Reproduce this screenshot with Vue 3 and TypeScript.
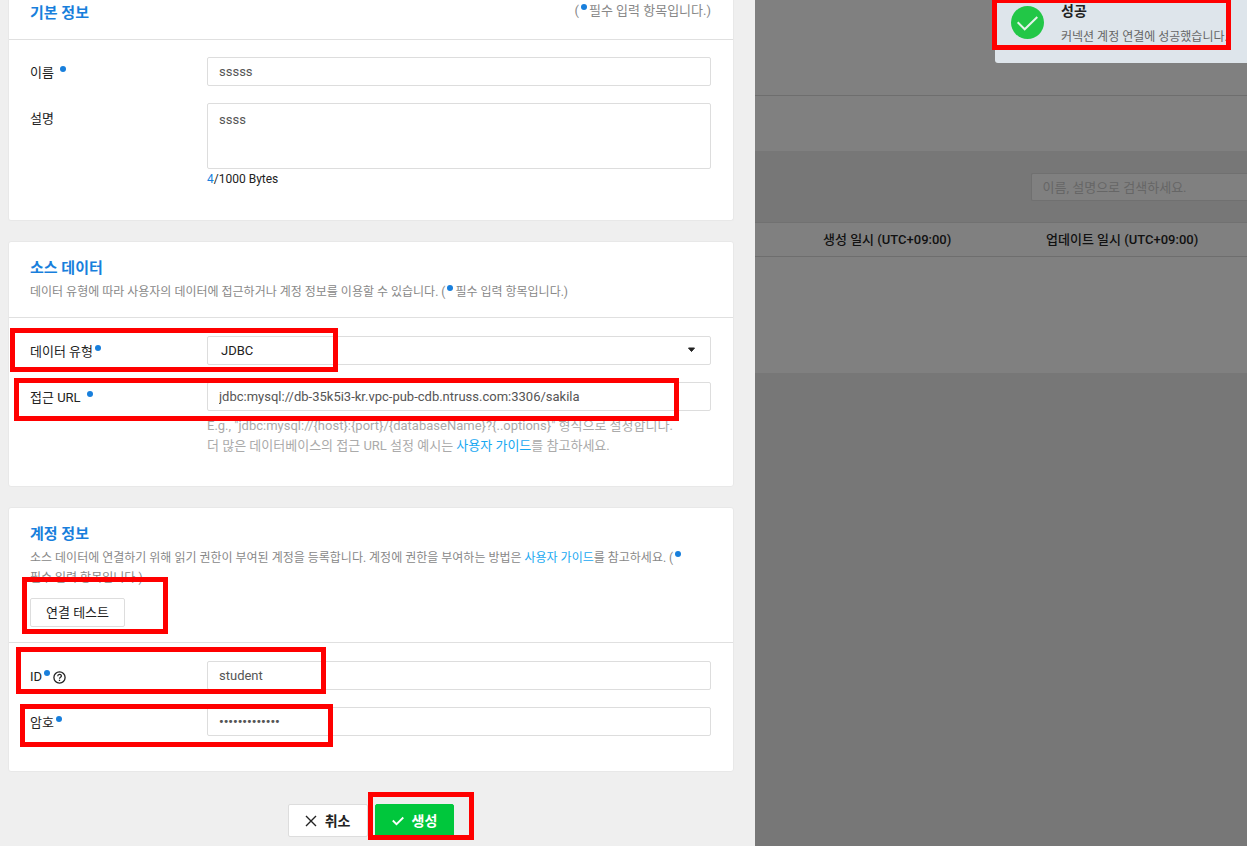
<script setup lang="ts">
import { ref, computed } from 'vue'

const name = ref('sssss')
const description = ref('ssss')
const dataType = ref('JDBC')
const url = ref('jdbc:mysql://db-35k5i3-kr.vpc-pub-cdb.ntruss.com:3306/sakila')
const accountId = ref('student')
const password = ref('student123456')
const keyword = ref('')

const byteCount = computed(() => new TextEncoder().encode(description.value).length)
</script>

<template>
  <div class="page">
    <form class="drawer" @submit.prevent>
      <section class="card card-first">
        <header class="card-head head-inline">
          <h2>기본 정보</h2>
          <p class="desc note">(<i class="dot dot-note"></i>필수 입력 항목입니다.)</p>
        </header>
        <div class="card-body">
          <div class="row">
            <label class="label" for="name">이름<i class="dot dot-wide"></i></label>
            <input id="name" v-model="name" class="field" type="text" />
          </div>
          <div class="row">
            <label class="label" for="description">설명</label>
            <div class="control">
              <textarea id="description" v-model="description" class="field area"></textarea>
              <p class="count"><b>{{ byteCount }}</b>/1000 Bytes</p>
            </div>
          </div>
        </div>
      </section>

      <section class="card card-source">
        <header class="card-head">
          <h2>소스 데이터</h2>
          <p class="desc">데이터 유형에 따라 사용자의 데이터에 접근하거나 계정 정보를 이용할 수 있습니다. (<i class="dot dot-note"></i>필수 입력 항목입니다.)</p>
        </header>
        <div class="card-body">
          <div class="row">
            <label class="label" for="type">데이터 유형<i class="dot"></i></label>
            <div class="control select-wrap">
              <select id="type" v-model="dataType" class="field select">
                <option>JDBC</option>
              </select>
              <svg class="caret" width="9" height="6" viewBox="0 0 9 6"><path d="M1.500 1h6L4.500 4.500z" fill="#222" stroke="#222" stroke-linejoin="round" /></svg>
            </div>
          </div>
          <div class="row">
            <label class="label" for="url">접근 URL<i class="dot dot-wide"></i></label>
            <div class="control">
              <input id="url" v-model="url" class="field" type="text" />
              <p class="hint">E.g., "jdbc:mysql://{host}:{port}/{databaseName}?{..options}" 형식으로 설정합니다.<br />더 많은 데이터베이스의 접근 URL 설정 예시는 <a href="#">사용자 가이드</a>를 참고하세요.</p>
            </div>
          </div>
        </div>
      </section>

      <section class="card card-account">
        <header class="card-head">
          <h2>계정 정보</h2>
          <p class="desc">소스 데이터에 연결하기 위해 읽기 권한이 부여된 계정을 등록합니다. 계정에 권한을 부여하는 방법은 <a href="#">사용자 가이드</a>를 참고하세요. (<i class="dot dot-note"></i><br />필수 입력 항목입니다.)</p>
          <button class="test" type="button">연결 테스트</button>
        </header>
        <div class="card-body">
          <div class="row">
            <label class="label" for="account">ID<i class="dot"></i><svg class="help" width="13" height="13" viewBox="0 0 13 13" fill="none" stroke="#222"><circle cx="6.5" cy="6.5" r="5.6" stroke-width="1.3" /><path d="M4.7 5.2c0-2.5 3.7-2.4 3.7-.2 0 1.300-1.900 1.300-1.900 2.700" stroke-width="1.2" /><path d="M6.500 8.700v1.300" stroke-width="1.300" /></svg></label>
            <input id="account" v-model="accountId" class="field" type="text" />
          </div>
          <div class="row">
            <label class="label" for="password">암호<i class="dot"></i></label>
            <input id="password" v-model="password" class="field password" type="password" />
          </div>
        </div>
      </section>

      <div class="actions">
        <button class="action cancel" type="button">
          <svg width="12" height="12" viewBox="0 0 12 12" fill="none" stroke="#222" stroke-width="1.4"><path d="M1 1l10 10M11 1L1 11" /></svg>
          취소
        </button>
        <button class="action create" type="submit">
          <svg width="12" height="12" viewBox="0 0 12 12" fill="none" stroke="#fff" stroke-width="1.8"><path d="M0.800 5.500l3.700 3.700L11.300 2.500" /></svg>
          생성
        </button>
      </div>
    </form>

    <main class="backdrop">
      <div class="topbar"></div>
      <div class="titlebar"></div>
      <div class="toolbar">
        <input v-model="keyword" class="search" type="text" aria-label="검색" placeholder="이름, 설명으로 검색하세요." />
      </div>
      <table class="list">
        <thead>
          <tr>
            <th>생성 일시 (UTC+09:00)</th>
            <th>업데이트 일시 (UTC+09:00)</th>
          </tr>
        </thead>
        <tbody>
          <tr><td colspan="2"></td></tr>
        </tbody>
      </table>
    </main>

    <aside class="toast" role="status">
      <svg width="33" height="33" viewBox="0 0 33 33" fill="none"><circle cx="16.500" cy="16.500" r="16.500" fill="#22c747" /><path d="M6.700 16.300l7 7L26.300 11" stroke="#e3f3ea" stroke-width="2" /></svg>
      <div>
        <strong>성공</strong>
        <p>커넥션 계정 연결에 성공했습니다.</p>
      </div>
    </aside>

    <div class="mark mark-toast"></div>
    <div class="mark mark-type"></div>
    <div class="mark mark-url"></div>
    <div class="mark mark-test"></div>
    <div class="mark mark-id"></div>
    <div class="mark mark-password"></div>
    <div class="mark mark-create"></div>
  </div>
</template>

<style>
body {
  margin: 0;
  overflow: hidden;
}
</style>

<style scoped>
.page {
  position: relative;
  display: grid;
  grid-template-columns: minmax(0, 755fr) minmax(0, 492fr);
  min-height: 100vh;
  overflow: hidden;
  color: #222;
  font-family: Roboto, "Noto Sans CJK KR", sans-serif;
  font-size: 13px;
  line-height: 20px;
}
.page * {
  box-sizing: border-box;
}
h2,
p {
  margin: 0;
}
input,
select,
textarea,
button {
  font: inherit;
}
a {
  color: #18a8f1;
  text-decoration: none;
}
.drawer {
  background: #efefef;
  padding: 0 21px 0 8px;
}
.card {
  background: #fff;
  border: 1px solid #e8e8e8;
  border-radius: 3px;
  margin-bottom: 20px;
}
.card-first {
  border-top: 0;
  border-radius: 0 0 3px 3px;
}
.card-head {
  padding: 16px 22px 15px 21px;
  border-bottom: 1px solid #e0e0e0;
}
.head-inline {
  display: flex;
  justify-content: space-between;
  align-items: flex-start;
  padding-top: 3px;
  padding-bottom: 12px;
}
h2 {
  margin-bottom: 4px;
  color: #187fdc;
  font-size: 15px;
  font-weight: 700;
}
.desc {
  color: #888;
  font-size: 12px;
}
.note {
  font-size: 13px;
  line-height: 16px;
}
.card-body {
  display: grid;
  gap: 17px;
  padding: 18px 22px 31px 21px;
}
.card-first .card-body {
  padding-top: 17px;
}
.card-source .card-body {
  padding-bottom: 30px;
}
.card-account .card-body {
  padding-bottom: 35px;
}
.row {
  display: grid;
  grid-template-columns: 177px minmax(0, 1fr);
}
.label {
  padding-top: 6px;
}
.field {
  width: 100%;
  height: 29px;
  display: block;
  padding: 0 11px;
  border: 1px solid #ddd;
  border-radius: 2px;
  background: #fff;
  color: #555;
  outline: 0;
}
.area {
  height: 66px;
  padding: 6px 11px;
  resize: none;
}
.password {
  font-weight: 700;
}
.count {
  font-size: 12px;
}
.count b {
  color: #187fdc;
  font-weight: 400;
}
.select-wrap {
  position: relative;
}
.select {
  appearance: none;
  padding: 0 13px;
  color: #222;
}
.caret {
  position: absolute;
  right: 15px;
  top: 11px;
}
.hint {
  padding-top: 5px;
  color: #aaa;
}
.dot {
  display: inline-block;
  width: 6px;
  height: 6px;
  margin: 0 2px;
  border-radius: 50%;
  background: #187fdc;
  vertical-align: 5px;
}
.dot-wide {
  margin-left: 6px;
}
.help {
  margin-left: 1px;
  vertical-align: -3px;
}
.test {
  display: block;
  height: 29px;
  margin-top: 10px;
  padding: 0 15px;
  border: 1px solid #ddd;
  border-radius: 2px;
  background: #fff;
  color: #222;
}
.actions {
  display: flex;
  justify-content: center;
  gap: 7px;
  padding-top: 12px;
}
.action {
  display: flex;
  align-items: center;
  gap: 8px;
  height: 33px;
  padding: 0 16px;
  border: 1px solid #ddd;
  border-radius: 2px;
  font-size: 14px;
  font-weight: 700;
}
.cancel {
  background: #fff;
  color: #222;
}
.create {
  background: #00c73c;
  border-color: #00c73c;
  color: #fff;
}
.backdrop {
  background: #777;
}
.topbar {
  height: 96px;
  background: #808080;
  border-bottom: 1px solid #6e6e6e;
}
.titlebar {
  height: 55px;
  background: #808080;
}
.toolbar {
  display: flex;
  justify-content: flex-end;
  height: 71px;
  padding-top: 22px;
}
.search {
  width: 44%;
  height: 28px;
  padding: 0 11px;
  border: 1px solid #707070;
  border-right: 0;
  border-radius: 2px 0 0 2px;
  background: #808080;
  color: #222;
}
.search::placeholder {
  color: #666;
}
.list {
  width: 100%;
  border-collapse: collapse;
  table-layout: fixed;
  background: #808080;
  color: #111;
}
.list th {
  height: 34px;
  padding: 0 0 0 68px;
  border-top: 1px solid #717171;
  border-bottom: 1px solid #6e6e6e;
  text-align: left;
  font-weight: 500;
}
.list th + th {
  padding-left: 45px;
}
.list td {
  height: 116px;
  padding: 0;
}
.toast {
  position: absolute;
  top: 0;
  right: 0;
  display: flex;
  gap: 17px;
  width: 252px;
  height: 63px;
  padding: 6px 0 0 16px;
  border-radius: 0 0 0 3px;
  background: #dee5eb;
  white-space: nowrap;
}
.toast div {
  margin-top: -6px;
}
.toast strong {
  display: block;
  font-size: 14px;
  font-weight: 700;
  line-height: 22px;
}
.toast p {
  margin-top: 5px;
  color: #666;
  font-size: 12px;
}
.mark {
  position: absolute;
  border: 5px solid #f00;
  pointer-events: none;
}
.mark-toast {
  top: -2px;
  right: 16px;
  width: 239px;
  height: 52px;
}
.mark-type {
  left: 10px;
  top: 328px;
  width: 328px;
  height: 44px;
}
.mark-url {
  left: 14px;
  top: 378px;
  width: 665px;
  height: 43px;
}
.mark-test {
  left: 22px;
  top: 577px;
  width: 146px;
  height: 57px;
}
.mark-id {
  left: 16px;
  top: 647px;
  width: 310px;
  height: 47px;
}
.mark-password {
  left: 20px;
  top: 704px;
  width: 313px;
  height: 43px;
}
.mark-create {
  left: 368px;
  top: 792px;
  width: 106px;
  height: 48px;
}
</style>
